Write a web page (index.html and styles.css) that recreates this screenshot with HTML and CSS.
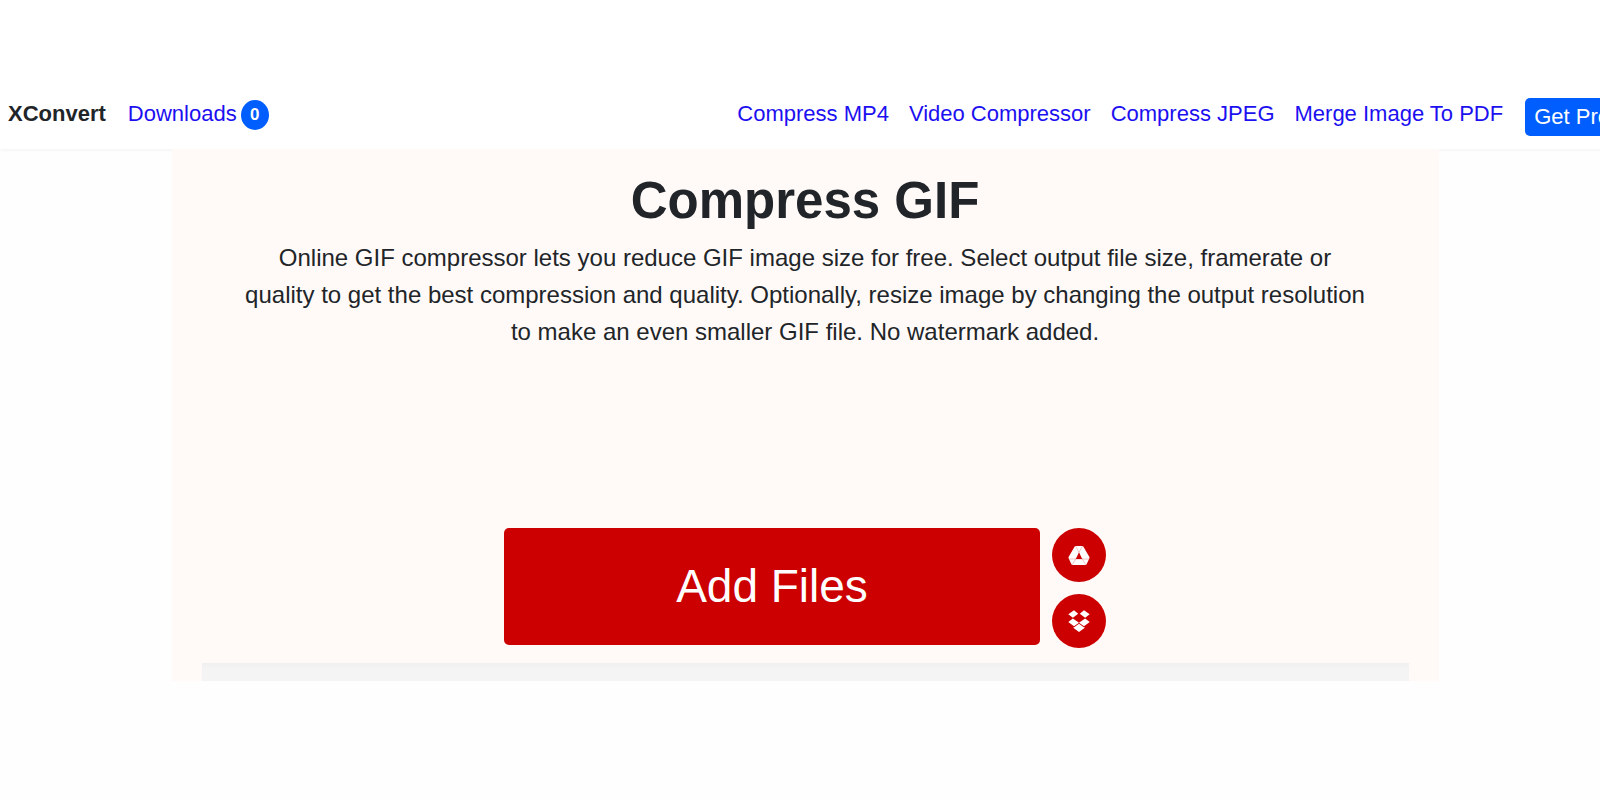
FILE: index.html
```html
<!DOCTYPE html>
<html lang="en">
<head>
<meta charset="utf-8">
<title>Compress GIF - XConvert</title>
<link rel="stylesheet" href="styles.css">
</head>
<body>
<div class="page">
  <header class="navbar">
    <span class="brand">XConvert</span>
    <a class="downloads" href="#downloads">Downloads <span class="badge">0</span></a>
    <nav class="links">
      <a href="#mp4">Compress MP4</a>
      <a href="#video">Video Compressor</a>
      <a href="#jpeg">Compress JPEG</a>
      <a href="#merge">Merge Image To PDF</a>
    </nav>
    <button class="pro" type="button">Get Pro</button>
  </header>
  <main class="converter">
    <h1>Compress GIF</h1>
    <p class="intro">Online GIF compressor lets you reduce GIF image size for free. Select output file size, framerate or quality to get the best compression and quality. Optionally, resize image by changing the output resolution to make an even smaller GIF file. No watermark added.</p>
    <div class="upload">
      <button class="add" type="button">Add Files</button>
      <div class="sources">
        <button class="source" type="button" aria-label="Google Drive">
          <svg viewBox="0 0 22 22" width="22" height="22"><path fill="#fff" d="M7.500 2h7q.5 0 .8.500l6.100 10.500q.3.600 0 1.200L18.600 20.300q-.3.700-1 .7H4.400q-.7 0-1-.7L.6 14.200q-.3-.6 0-1.200L6.700 2.500q.3-.5.800-.5z"/><path fill="#c00" d="M11 8.300l3.200 6.700H7.800z"/><path fill="none" stroke="#c00" stroke-opacity=".6" stroke-width=".4" d="M7.500 2L11 8.300 14.500 2M.5 15h21M7.800 15L4 21M14.200 15L18 21"/></svg>
        </button>
        <button class="source" type="button" aria-label="Dropbox">
          <svg viewBox="0 0 22 22" width="22" height="22"><path fill="#fff" d="M6 .3L10.200 3.700 4.900 7.700 .3 4.200zM16 .3L21.700 4.200 17.100 7.700 11.800 3.700zM.3 12L4.900 8.400 11 12.700 6 16.200zM17.100 8.400L21.700 12 16 16.200 11 12.700zM5.600 17.100L6.200 17.200 11 13.700 15.800 17.200 16.500 17.100V18L11 21.900 5.600 18z"/></svg>
        </button>
      </div>
    </div>
    <div class="panel"></div>
  </main>
</div>
</body>
</html>
```
FILE: styles.css
```css
* {
  box-sizing: border-box;
}

body {
  margin: 0;
  background: #fefefe;
  color: #212529;
  font-family: "Liberation Sans", Arial, sans-serif;
  overflow-x: hidden;
}

button {
  border: 0;
  color: #fff;
  font-family: inherit;
  cursor: pointer;
}

.page {
  margin-right: -10px;
}

.navbar {
  display: flex;
  align-items: flex-start;
  gap: 22px;
  margin-right: -9px;
  padding: 98px 0 13px 8px;
  background: #fff;
  box-shadow: 0 1px 4px rgba(0, 0, 0, 0.05);
  font-size: 22px;
  line-height: 32px;
}

.navbar a {
  color: #1c10f0;
  text-decoration: none;
  white-space: nowrap;
}

.brand {
  font-weight: bold;
}

.downloads {
  display: flex;
  gap: 4px;
}

.badge {
  width: 28px;
  height: 30px;
  margin-top: 2px;
  border-radius: 50%;
  background: #005eff;
  color: #fff;
  font-size: 17px;
  font-weight: bold;
  line-height: 30px;
  text-align: center;
}

.links {
  display: flex;
  gap: 20px;
  margin-left: auto;
}

.pro {
  height: 38px;
  padding: 0 9px;
  border-radius: 5px;
  background: #005eff;
  font-size: 22px;
  white-space: nowrap;
}

.converter {
  width: 1267px;
  max-width: calc(100% - 32px);
  margin: 0 auto;
  padding: 20px 30px 0;
  background: #fffaf7;
  text-align: center;
}

h1 {
  margin: 0;
  font-size: 51px;
  line-height: 64px;
}

.intro {
  margin: 6px 42px 178px;
  font-size: 24px;
  line-height: 37px;
}

.upload {
  display: flex;
  justify-content: center;
  gap: 12px;
  padding-bottom: 15px;
}

.add {
  width: 536px;
  height: 117px;
  padding-bottom: 3px;
  border-radius: 5px;
  background: #c00;
  font-size: 46px;
}

.sources {
  display: grid;
  gap: 12px;
}

.source {
  display: grid;
  place-items: center;
  width: 54px;
  height: 54px;
  padding: 0;
  border-radius: 50%;
  background: #c00;
}

.panel {
  height: 18px;
  background: linear-gradient(#f0f0f0, #f4f4f4 6px);
}
```
